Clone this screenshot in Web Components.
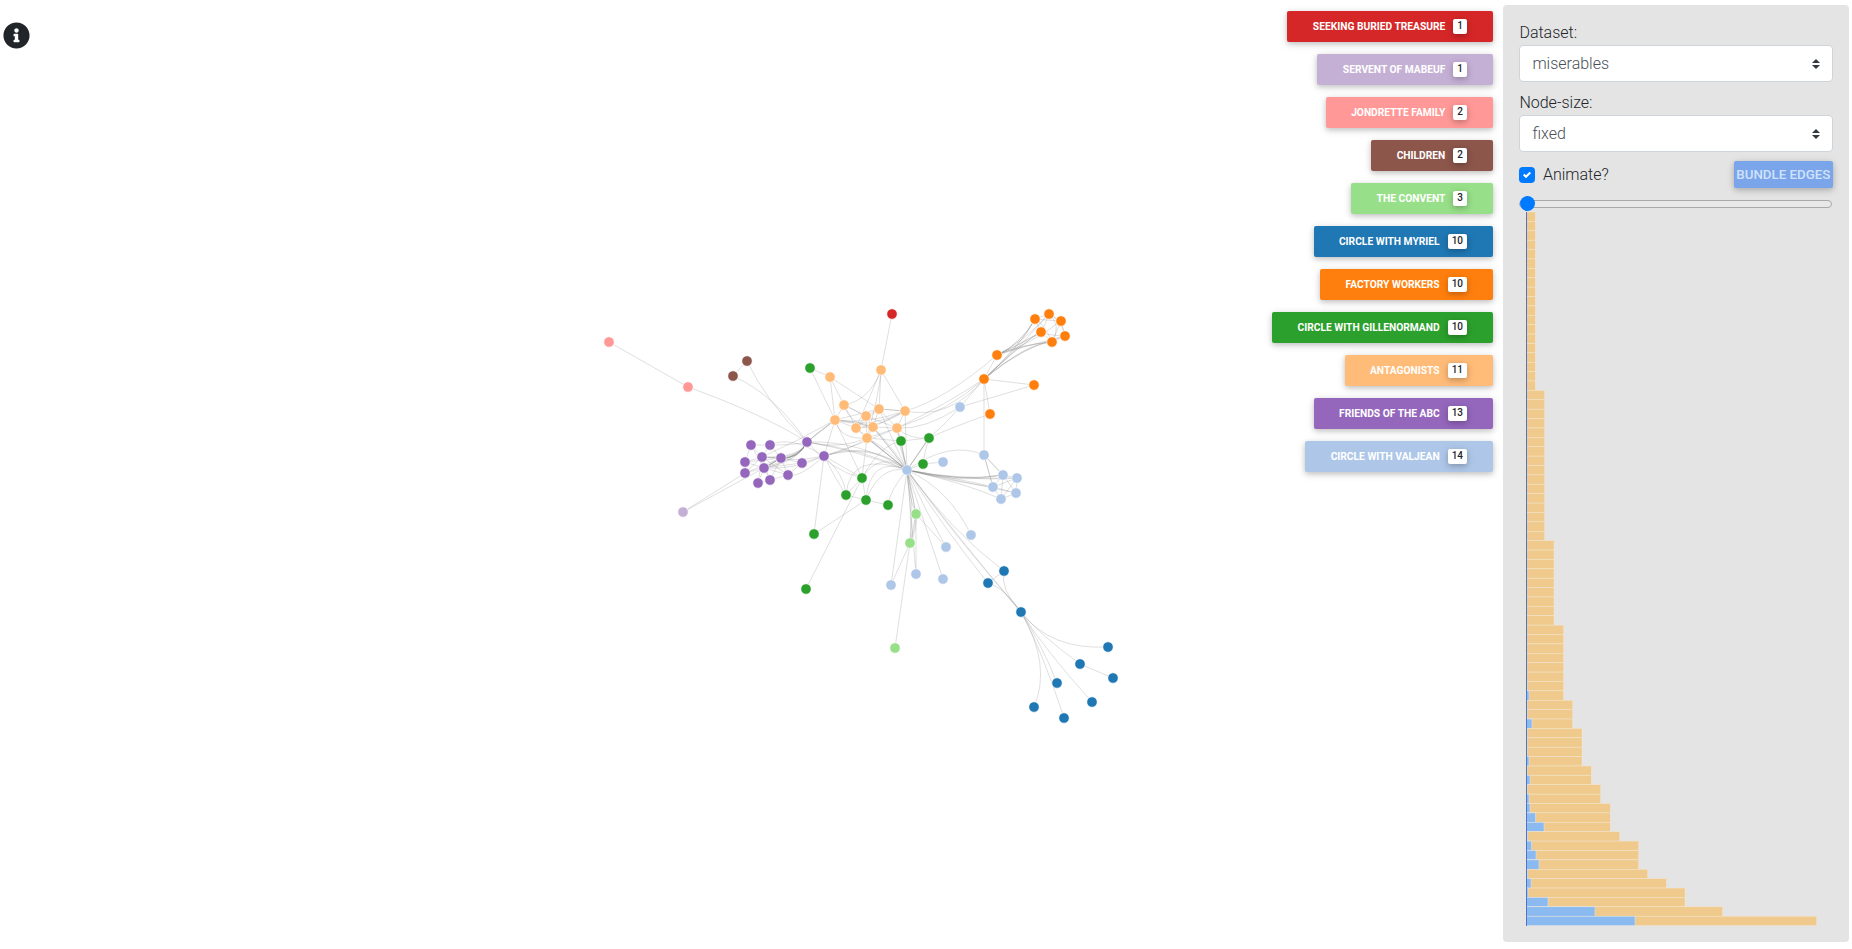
<!DOCTYPE html>
<html>
<head>
<meta charset="utf-8">
<title>Graph bundling</title>
<style>
html, body { margin: 0; height: 100%; background: #fff; overflow: hidden; }
body { display: flex; font-family: Roboto, "Liberation Sans", sans-serif; font-weight: 300; color: #212529; }
</style>
</head>
<body>
<graph-view></graph-view>
<legend-list>
    <legend-button color="#d62728" count="1">Seeking buried treasure</legend-button>
    <legend-button color="#c5b0d5" count="1">Servent of Mabeuf</legend-button>
    <legend-button color="#ff9896" count="2">Jondrette family</legend-button>
    <legend-button color="#8c564b" count="2">Children</legend-button>
    <legend-button color="#98df8a" count="3">The convent</legend-button>
    <legend-button color="#1f77b4" count="10">Circle with Myriel</legend-button>
    <legend-button color="#ff7f0e" count="10">Factory workers</legend-button>
    <legend-button color="#2ca02c" count="10">Circle with Gillenormand</legend-button>
    <legend-button color="#ffbb78" count="11">Antagonists</legend-button>
    <legend-button color="#9467bd" count="13">Friends of the ABC</legend-button>
    <legend-button color="#aec7e8" count="14">Circle with Valjean</legend-button>
</legend-list>
<control-panel>
    <select-field label="Dataset:" value="miserables"></select-field>
    <select-field label="Node-size:" value="fixed"></select-field>
    <animate-row></animate-row>
    <range-slider></range-slider>
    <hist-chart></hist-chart>
</control-panel>
<script>
// node positions of the drawn graph, by group
const NODES = {
    '#ff9896': {pk1: [609, 342], pk2: [688, 387]},
    '#8c564b': {br1: [747, 361], br2: [733, 376]},
    '#c5b0d5': {li: [683, 512]},
    '#d62728': {rd: [892, 314]},
    '#9467bd': {pu1: [751, 445], pu2: [770, 445], pu3: [807, 442], pu4: [762, 457], pu5: [781, 458], pu6: [745, 462], pu7: [802, 463],
        pu8: [824, 456], pu9: [764, 468], pu10: [745, 473], pu11: [788, 475], pu12: [770, 480], pu13: [758, 483]},
    '#ffbb78': {an1: [830, 377], an2: [881, 370], an3: [844, 405], an4: [879, 409], an5: [905, 411], an6: [866, 416], an7: [835, 420],
        an8: [856, 428], an9: [873, 427], an10: [897, 428], an11: [867, 438]},
    '#ff7f0e': {or1: [1035, 319], or2: [1049, 314], or3: [1061, 321], or4: [1041, 332], or5: [1065, 336], or6: [1052, 342], or7: [997, 355],
        or8: [984, 379], or9: [1034, 385], or10: [990, 414]},
    '#2ca02c': {gr1: [810, 368], gr2: [901, 441], gr3: [929, 438], gr4: [923, 464], gr5: [862, 478], gr6: [846, 495], gr7: [866, 500],
        gr8: [888, 505], gr9: [814, 534], gr10: [806, 589]},
    '#aec7e8': {va1: [960, 407], va2: [943, 462], va3: [907, 470], va4: [984, 455], va5: [1003, 475], va6: [1017, 478], va7: [993, 487],
        va8: [1016, 493], va9: [1001, 499], va10: [971, 535], va11: [946, 547], va12: [916, 574], va13: [943, 579], va14: [891, 585]},
    '#98df8a': {co1: [916, 514], co2: [910, 543], co3: [895, 648]},
    '#1f77b4': {my1: [1004, 571], my2: [988, 583], my3: [1021, 612], my4: [1108, 647], my5: [1080, 664], my6: [1113, 678], my7: [1057, 683],
        my8: [1092, 702], my9: [1034, 707], my10: [1064, 718]}
};

// "a b" is a straight edge, "a b cx cy" a bundled curve
const EDGES = `pk1 pk2;pk2 pu3 765 415;br1 br2;br1 pu3 765 400;br2 pu3 775 395;li pu10;li pu9;rd an2;
pu1 pu4;pu1 pu9;pu2 pu4;pu2 pu5;pu4 pu5;pu4 pu9;pu5 pu9;pu6 pu4;pu6 pu9;pu10 pu9;pu10 pu4;pu13 pu9;pu12 pu9;pu12 pu5;pu11 pu5;pu11 pu4;
pu7 pu5;pu1 pu6;pu10 pu6;pu13 pu12;pu11 pu12;pu7 pu8;pu1 pu2;pu6 pu5;pu10 pu5;pu13 pu4;pu12 pu4;pu11 pu9;pu7 pu9;pu7 pu11;
pu2 pu3 795 445;pu4 pu3 798 462;pu9 pu3 798 462;pu5 pu3 798 460;pu4 pu3 800 458;pu9 pu3 800 456;pu9 pu5;pu9 pu5;pu9 pu5;pu9 pu5;pu4 pu3 799 460;pu9 pu3 799 460;pu5 pu3 799 459;pu5 pu3 799 458;pu5 pu3 799 459;pu5 pu3 799 459;pu5 pu3 798 459;pu5 pu8 795 462;pu9 pu8 795 470;pu11 pu8 800 478;pu2 pu8 790 435;
pu3 an7;pu3 an7;pu3 an7 820 430;pu4 an7 800 440;pu3 va3 860 440;pu3 va3 865 450;pu8 va3 870 440;pu8 va3 872 442;pu8 an11 850 450;pu3 an11 840 450;pu8 an10 860 445;pu3 gr5 830 470;pu8 gr5 840 465;pu8 gr6 835 478;
pu3 va3 855 450;an7 pu8;pu8 gr9;gr1 an7;gr1 an1;an1 an7;an1 an4;an2 an4;an2 an5;an2 an3 870 400;an2 an11 880 390;an2 an8 875 385;
an3 an7;an3 an6;an3 an6;an3 an8 850 415;an3 an9 850 425;an4 an5;an4 an5;an4 an6;an4 an7 855 415;an4 an9;an4 an8;an5 an9;an5 an7 870 430;an5 an7 865 425;an5 an10;an5 an8 885 425;
an6 an8;an6 an9;an6 an11;an7 an8;an7 an9 855 420;an7 an9 855 422;an7 an11 840 440;an8 an9;an8 an11;an9 an11;an9 an10;an10 an11;an10 an4;an10 an6;an1 an3;an7 gr5;
an8 va3;an11 va3;an11 va3;an11 va3;an11 va3 890 450;an9 va3;an9 va3;an9 va3 895 450;an4 va3 895 445;an5 va3;an10 va3;an10 va3 900 450;an5 or8 950 420;an5 or7 945 400;an10 or8 950 410;an10 or8 945 405;
an10 gr3 910 440;an10 va1 925 430;gr2 va3;gr2 va3 903 455;gr2 an10;gr2 an11;gr3 va3;gr3 va3;gr3 va3 918 455;gr3 va1 945 425;gr3 or10 950 428;gr2 gr3;gr4 va3;gr4 va2;gr2 gr5 880 445;gr3 gr4 925 450;
gr5 gr6;gr5 gr7;gr6 gr7;gr7 gr8;gr8 va3 890 490;gr5 va3 880 450;gr6 va3 850 450;gr7 va3 870 455;gr7 va3 880 465;gr5 an11;gr7 gr9;gr10 gr5;gr6 pu8 845 475;
va1 or8;va1 or9;or8 or9;or8 or10;or8 va4;va4 va3 950 440;va4 va5;va4 va5;va4 va7;va3 va5 960 485;va3 va7 965 480;va3 va6 965 482;va3 va8 965 482;va3 va9 965 483;va3 va5 955 482;va3 va7 955 482;va3 va6 960 480;va3 va5 960 482;
va5 va6;va5 va7;va5 va9;va5 va8;va6 va8;va7 va9;va8 va9;va7 va8;va6 va7;va6 va9;va4 va7;
or7 or1 1020 345;or7 or4 1020 345;or7 or6 1020 345;or7 or2 1020 345;or7 or3 1030 345;or8 or1 1022 345;or8 or4 1020 345;or8 or2 1022 345;or8 or6 1025 345;or8 or5 1025 345;or7 or5 1030 345;or7 or8;
or7 or1 1022 343;or7 or4 1022 343;or8 or1 1025 340;or8 or4 1025 340;or7 or6 1022 344;or8 or6 1028 342;
or1 or2;or1 or3 1045 320;or1 or4;or2 or3;or2 or5 1062 320;or2 or6 1062 325;or3 or5;or3 or6;or4 or5 1045 335;or4 or6;or5 or6;or1 or6 1045 325;or2 or4 1045 325;
va3 co1;va3 co1 912 490;va3 co1 908 495;va3 co2 912 510;va3 co2 915 505;va3 va11 925 510;va3 va12;va3 va13 920 510;va3 va10 950 490;va3 va14;
co1 co2;co1 co2 917 530;co1 co2 915 530;co2 co3;co2 va14;co1 va12;co1 va11;va3 my1 950 530;va3 my3 960 540;va3 my3 950 530;va3 my2 945 530;
my1 my2;my1 my3 1000 590;my2 my3 1005 588;
my3 my4 1050 650;my3 my5 1040 635;my5 my6;my3 my7 1042 645;my3 my8 1045 650;my3 my9 1052 665;my3 my10 1042 650;`;

class GraphView extends HTMLElement {
    constructor() {
        super();
        this.attachShadow({mode: 'open'}).innerHTML = `<style>
            :host { display: block; flex: 1; position: relative; min-width: 0; }
            svg.graph { position: absolute; left: 0; top: 0; overflow: visible; }
            svg.info { position: absolute; left: 3px; top: 22px; width: 27px; height: 27px; fill: #212529; }
        </style>
        <svg class="graph" width="1272" height="949"><g id="edges" fill="none" stroke="#888" stroke-width=".9" stroke-opacity=".3"></g><g id="nodes" stroke="#fff" stroke-width=".6"></g></svg>
        <svg class="info" viewBox="0 0 512 512"><path d="M256 8C119.043 8 8 119.083 8 256c0 136.997 111.043 248 248 248s248-111.003 248-248C504 119.083 392.957 8 256 8zm0 110c23.196 0 42 18.804 42 42s-18.804 42-42 42-42-18.804-42-42 18.804-42 42-42zm56 254c0 6.627-5.373 12-12 12h-88c-6.627 0-12-5.373-12-12v-24c0-6.627 5.373-12 12-12h12v-64h-12c-6.627 0-12-5.373-12-12v-24c0-6.627 5.373-12 12-12h64c6.627 0 12 5.373 12 12v100h12c6.627 0 12 5.373 12 12v24z"/></svg>`;
    }

    connectedCallback() {
        const pos = {};
        let nodes = '';
        for (const [color, group] of Object.entries(NODES)) {
            for (const [id, [x, y]] of Object.entries(group)) {
                pos[id] = [x, y];
                nodes += `<circle cx="${x}" cy="${y}" r="5.2" fill="${color}"/>`;
            }
        }
        let edges = '';
        for (const line of EDGES.split(';')) {
            const parts = line.trim().split(/\s+/);
            if (parts.length < 2) continue;
            const [a, b] = [pos[parts[0]], pos[parts[1]]];
            const mid = parts.length > 2 ? `Q${parts[2]} ${parts[3]} ` : 'L';
            edges += `<path d="M${a[0]} ${a[1]} ${mid}${b[0]} ${b[1]}"/>`;
        }
        this.shadowRoot.getElementById('edges').innerHTML = edges;
        this.shadowRoot.getElementById('nodes').innerHTML = nodes;
    }
}

class LegendList extends HTMLElement {
    constructor() {
        super();
        this.attachShadow({mode: 'open'}).innerHTML = `<style>
            :host { display: flex; flex-direction: column; align-items: flex-end; gap: 12px; padding-top: 11px; flex: none; }
        </style><slot></slot>`;
    }
}

class LegendButton extends HTMLElement {
    constructor() {
        super();
        this.attachShadow({mode: 'open'}).innerHTML = `<style>
            :host { display: flex; align-items: center; flex: none; height: 31px; box-sizing: border-box; padding: 1px 26px 0 25.4px; border-radius: 2px;
                color: #fff; font: 700 10.24px/1 Roboto, sans-serif; text-transform: uppercase; white-space: nowrap;
                box-shadow: 0 2px 5px 0 rgba(0,0,0,.16), 0 2px 10px 0 rgba(0,0,0,.12); }
            .count { margin-left: 8px; padding: 2.5px 4px; line-height: 10px; font-size: 10px; font-weight: 500; color: #212529; background: #fff; border-radius: 2px;
                box-shadow: 0 2px 5px 0 rgba(0,0,0,.16), 0 2px 10px 0 rgba(0,0,0,.12); position: relative; top: -1px; }
        </style><slot></slot><span class="count"></span>`;
    }

    connectedCallback() {
        this.style.background = this.getAttribute('color');
        this.shadowRoot.querySelector('.count').textContent = this.getAttribute('count');
    }
}

class ControlPanel extends HTMLElement {
    constructor() {
        super();
        this.attachShadow({mode: 'open'}).innerHTML = `<style>
            :host { display: block; flex: none; box-sizing: border-box; width: 346px; height: 937px; margin: 5px 3px 7px 10px;
                padding: 16px 16.2px 0 16.4px; background: #e4e4e4; border-radius: 4px; }
        </style><slot></slot>`;
    }
}

class SelectField extends HTMLElement {
    constructor() {
        super();
        this.attachShadow({mode: 'open'}).innerHTML = `<style>
            :host { display: block; margin-bottom: 9px; }
            label { display: block; font-size: 16px; line-height: 24px; margin-bottom: .4px; }
            .wrap { position: relative; }
            select { display: block; width: 100%; height: 36.6px; box-sizing: border-box; padding: 0 30px 0 12px; appearance: none; background: #fff;
                border: 1px solid #ced4da; border-radius: 4px; font: 300 16px Roboto, sans-serif; color: #495057; }
            svg { position: absolute; right: 12.5px; top: 13.3px; width: 8px; height: 10px; fill: #343a40; }
        </style>
        <label></label>
        <div class="wrap"><select></select><svg viewBox="0 0 8 10"><path d="M4 0 8 4H0zM4 10 0 6H8z"/></svg></div>`;
    }

    connectedCallback() {
        const value = this.getAttribute('value');
        this.shadowRoot.querySelector('label').textContent = this.getAttribute('label');
        this.shadowRoot.querySelector('select').innerHTML = `<option>${value}</option>`;
    }
}

class AnimateRow extends HTMLElement {
    constructor() {
        super();
        this.attachShadow({mode: 'open'}).innerHTML = `<style>
            :host { display: flex; align-items: center; justify-content: space-between; margin-top: 9px; height: 27px; }
            .check { display: flex; align-items: center; gap: 7.5px; font-size: 16px; }
            .box { width: 16px; height: 16px; margin-top: 2px; border-radius: 4px; background: #007bff; display: block; }
            svg { display: block; width: 16px; height: 16px; fill: #fff; }
            button { width: 99px; height: 27px; padding: 0; border: 0; border-radius: 2px; background: #7aa5ea; color: #d0e2fb;
                font: 500 13.3px Roboto, sans-serif; text-transform: uppercase; box-shadow: 0 2px 5px 0 rgba(0,0,0,.16), 0 2px 10px 0 rgba(0,0,0,.12); }
        </style>
        <div class="check"><span class="box"><svg viewBox="0 0 8 8"><path d="M6.564.75l-3.59 3.612-1.538-1.55L0 4.26l2.974 2.99L8 2.193z" transform="translate(2 2) scale(.5)"/></svg></span>Animate?</div>
        <button>Bundle edges</button>`;
    }
}

class RangeSlider extends HTMLElement {
    constructor() {
        super();
        this.attachShadow({mode: 'open'}).innerHTML = `<style>
            :host { display: block; margin: 8px 0 0 -.3px; height: 16px; width: 312.6px; }
            input { display: block; appearance: none; width: 100%; height: 16px; margin: 0; background: none; }
            input::-webkit-slider-runnable-track { height: 8px; box-sizing: border-box; border: 1px solid #a9a9a9; border-radius: 4px; background: #e8e8e8; }
            input::-webkit-slider-thumb { appearance: none; width: 15px; height: 15px; margin-top: -4.5px; border-radius: 50%; background: #007bff; }
        </style><input type="range" min="0" max="100" value="0">`;
    }
}

// histogram bars: [orange width, [blue widths of the rows in this step]]
const STEPS = [
    [9.3, Array(19).fill(0)],
    [18.7, Array(16).fill(0)],
    [28, Array(9).fill(0)],
    [37.7, [0, 0, 0, 0, 0, 0, 1, 3]],
    [46.7, [1, 1, 6]],
    [56, [1, 1, 1, 3]],
    [65.3, [1, 4]],
    [74.7, [1, 3]],
    [84.3, [4, 9.5, 18]],
    [93.7, [1.5]],
    [112.7, [5.5, 10, 13]],
    [121.7, [1.5]],
    [140.3, [5]],
    [159, [2, 22]],
    [196.7, [69]],
    [290.7, [109]]
];

class HistChart extends HTMLElement {
    constructor() {
        super();
        this.attachShadow({mode: 'open'}).innerHTML = `<style>
            :host { display: block; margin-left: 6.4px; height: 714px; }
            svg { display: block; overflow: visible; }
        </style><svg width="310" height="714"></svg>`;
    }

    connectedCallback() {
        const rowH = 713.6 / 76;
        let y = 0, out = '';
        for (const [width, blues] of STEPS) {
            for (const blue of blues) {
                out += `<rect x="0" y="${y}" width="${width}" height="${rowH}" fill="#efca8c" stroke="#f3e6cf" stroke-width=".5"/>`;
                if (blue) out += `<rect x="0" y="${y}" width="${blue}" height="${rowH}" fill="#8abaef" stroke="#e3e8ef" stroke-width=".5"/>`;
                y += rowH;
            }
        }
        out += `<line x1=".5" x2=".5" y1="0" y2="714" stroke="#4f74c9" stroke-width="1"/>`;
        this.shadowRoot.querySelector('svg').innerHTML = out;
    }
}

customElements.define('graph-view', GraphView);
customElements.define('legend-list', LegendList);
customElements.define('legend-button', LegendButton);
customElements.define('control-panel', ControlPanel);
customElements.define('select-field', SelectField);
customElements.define('animate-row', AnimateRow);
customElements.define('range-slider', RangeSlider);
customElements.define('hist-chart', HistChart);
</script>
</body>
</html>
